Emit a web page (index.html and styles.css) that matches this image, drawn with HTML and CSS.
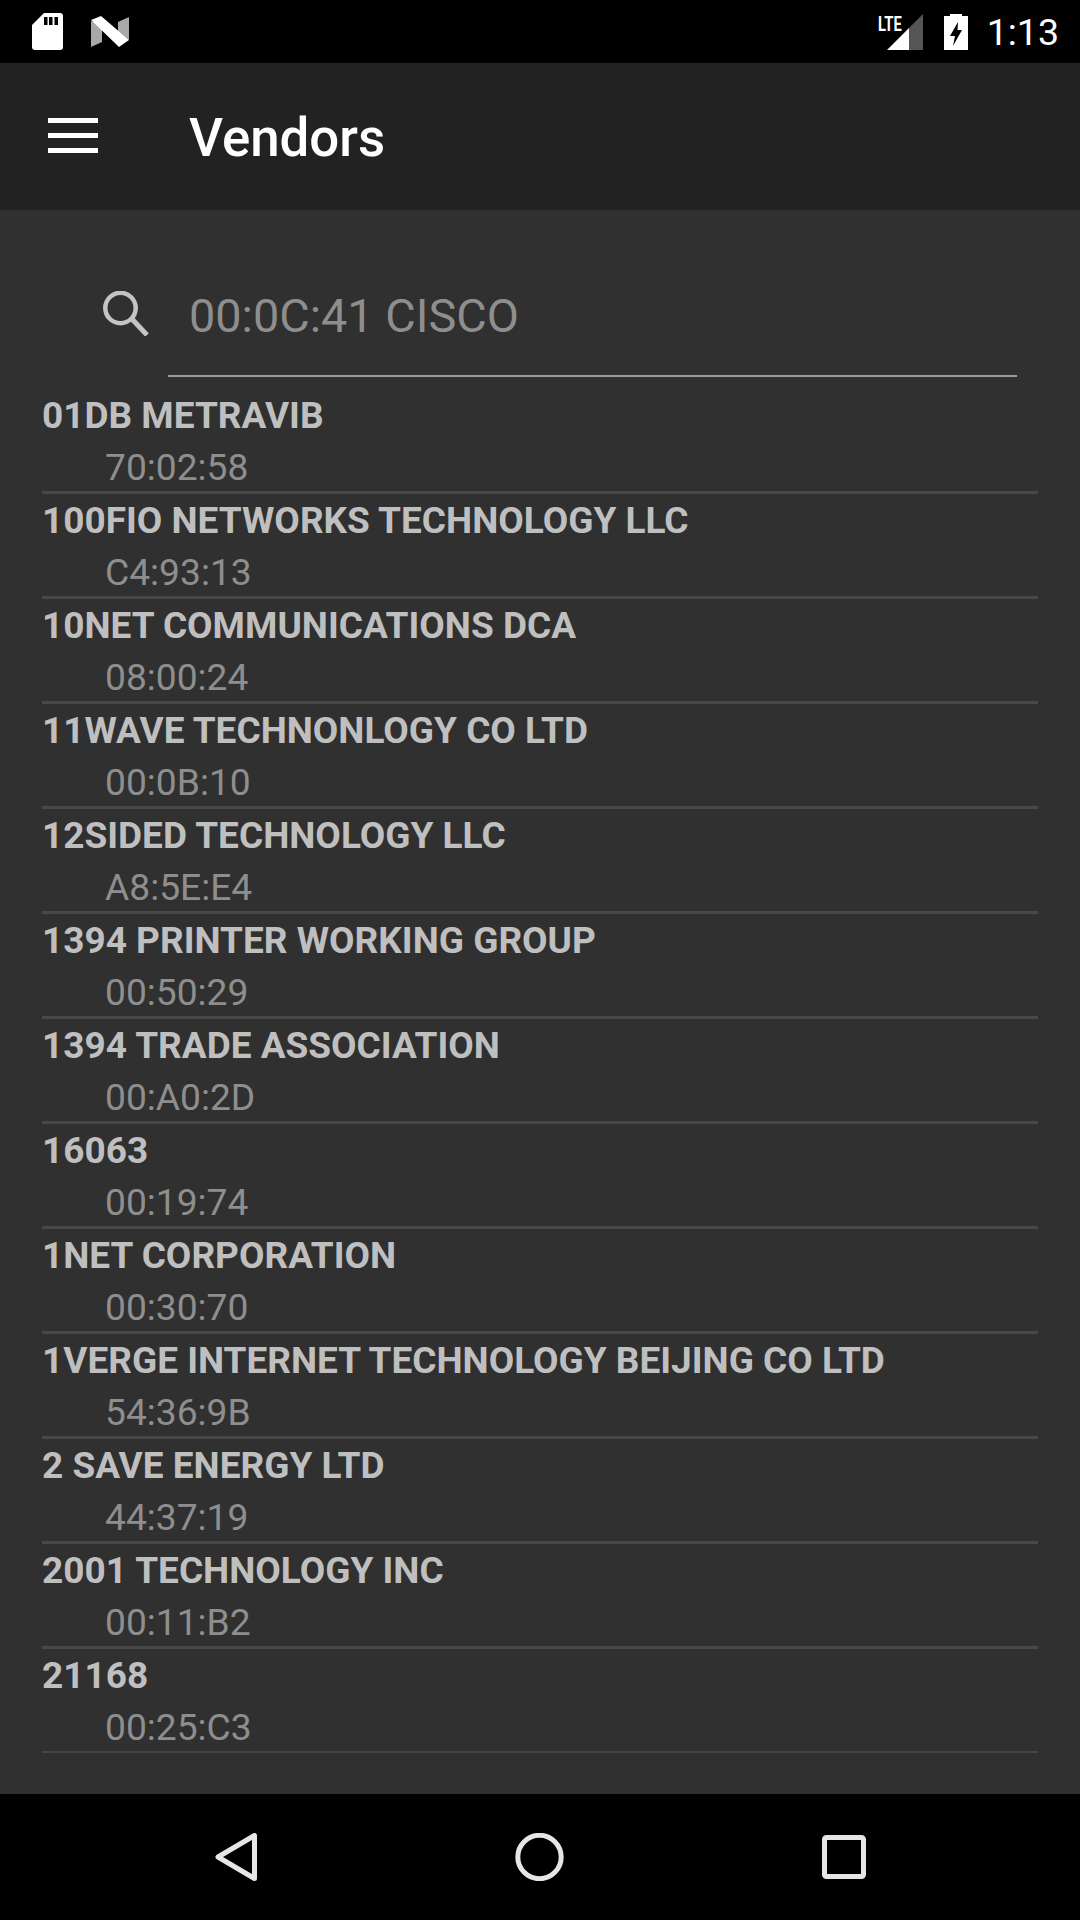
FILE: index.html
```html
<!DOCTYPE html>
<html lang="en">
<head>
<meta charset="utf-8">
<title>Vendors</title>
<link rel="stylesheet" href="styles.css">
</head>
<body>
<div class="screen">
  <header class="status">
    <div class="status-left">
      <svg class="ic-sd" viewBox="0 0 31 37"><path d="M12 0H28a3 3 0 0 1 3 3V34a3 3 0 0 1-3 3H3a3 3 0 0 1-3-3V12Z" fill="#fff"/><path d="M12 4h3.5v8H12zM17 4h3.5v8H17zM22.5 4H26v8h-3.5z" fill="#000"/></svg>
      <svg class="ic-n" viewBox="0 0 39 31"><path d="M1 5 12 9V26L1 31Z" fill="#a8a8a8"/><path d="M28 6 39 1V24L28 15Z" fill="#a8a8a8"/><path d="M1 4 11 0 39 24 29 31Z" fill="#fff"/></svg>
    </div>
    <div class="status-right">
      <div class="signal">
        <svg class="ic-signal" viewBox="0 0 36 36"><path d="M0 36 22 14V36Z" fill="#fff"/><path d="M22 14 36 0V36H22Z" fill="#555"/></svg>
        <span class="lte">LTE</span>
      </div>
      <svg class="ic-bat" viewBox="0 0 24 36"><path d="M6 0H18V2H24V36H0V2H6Z" fill="#fff"/><path d="M14 8 6 22H11L9 32 18 16H13.5Z" fill="#000"/></svg>
      <span class="clock">1:13</span>
    </div>
  </header>
  <div class="toolbar">
    <svg class="ic-menu" viewBox="0 0 50 35"><path d="M0 0H50V5H0ZM0 15H50V20H0ZM0 30H50V35H0Z" fill="#fff"/></svg>
    <h1 class="title">Vendors</h1>
  </div>
  <main class="content">
    <div class="search">
      <svg class="ic-search" viewBox="0 0 46 45"><circle cx="17.5" cy="17" r="15.2" fill="none" stroke="#c4c4c4" stroke-width="4.5"/><path d="M28 27 44 44" stroke="#c4c4c4" stroke-width="5" fill="none"/></svg>
      <div class="search-field">00:0C:41 CISCO</div>
    </div>
    <ul class="list">
      <li class="row"><div class="name">01DB METRAVIB</div><div class="mac">70:02:58</div></li>
      <li class="row"><div class="name">100FIO NETWORKS TECHNOLOGY LLC</div><div class="mac">C4:93:13</div></li>
      <li class="row"><div class="name">10NET COMMUNICATIONS DCA</div><div class="mac">08:00:24</div></li>
      <li class="row"><div class="name">11WAVE TECHNONLOGY CO LTD</div><div class="mac">00:0B:10</div></li>
      <li class="row"><div class="name">12SIDED TECHNOLOGY LLC</div><div class="mac">A8:5E:E4</div></li>
      <li class="row"><div class="name">1394 PRINTER WORKING GROUP</div><div class="mac">00:50:29</div></li>
      <li class="row"><div class="name">1394 TRADE ASSOCIATION</div><div class="mac">00:A0:2D</div></li>
      <li class="row"><div class="name">16063</div><div class="mac">00:19:74</div></li>
      <li class="row"><div class="name">1NET CORPORATION</div><div class="mac">00:30:70</div></li>
      <li class="row"><div class="name">1VERGE INTERNET TECHNOLOGY BEIJING CO LTD</div><div class="mac">54:36:9B</div></li>
      <li class="row"><div class="name">2 SAVE ENERGY LTD</div><div class="mac">44:37:19</div></li>
      <li class="row"><div class="name">2001 TECHNOLOGY INC</div><div class="mac">00:11:B2</div></li>
      <li class="row last"><div class="name">21168</div><div class="mac">00:25:C3</div></li>
    </ul>
  </main>
  <nav class="navbar">
    <svg class="ic-back" viewBox="0 0 42 48"><path d="M39.5 2.5V45.5L3 24Z" fill="none" stroke="#e6e6e6" stroke-width="5" stroke-linejoin="round"/></svg>
    <svg class="ic-home" viewBox="0 0 49 48"><circle cx="24.5" cy="24" r="21.7" fill="none" stroke="#e6e6e6" stroke-width="5"/></svg>
    <svg class="ic-recent" viewBox="0 0 44 44"><rect x="2.5" y="2.5" width="39" height="39" rx="2" fill="none" stroke="#e6e6e6" stroke-width="5"/></svg>
  </nav>
</div>
</body>
</html>
```
FILE: styles.css
```css
* { box-sizing: border-box; margin: 0; padding: 0; }
html, body { width: 1080px; height: 1920px; background: #000; overflow: hidden; }
body { font-family: Roboto, "Liberation Sans", sans-serif; }
.screen { width: 1080px; height: 1920px; display: flex; flex-direction: column; }
.status { height: 63px; background: #000; display: flex; justify-content: space-between; align-items: center; padding: 0 21px 0 32px; }
.status-left { display: flex; align-items: center; gap: 27px; }
.ic-sd { width: 31px; height: 37px; }
.ic-n { width: 39px; height: 31px; }
.status-right { display: flex; align-items: center; }
.signal { position: relative; width: 36px; height: 36px; margin-right: 21px; }
.ic-signal { display: block; width: 36px; height: 36px; }
.lte { position: absolute; left: -9px; top: -2px; font-size: 21px; font-weight: 700; line-height: 24px; color: #fff; transform: scaleX(.7); transform-origin: left center; }
.ic-bat { width: 24px; height: 36px; margin-right: 19px; }
.clock { color: #fff; font-size: 37.5px; line-height: 42px; }
.toolbar { height: 147px; background: #222; display: flex; align-items: center; padding-left: 48px; }
.ic-menu { width: 50px; height: 35px; margin-top: -2px; }
.title { margin-left: 91px; margin-top: 3px; font-size: 52.8px; font-weight: 500; color: #fff; line-height: 60px; }
.content { flex: 1; background: #303030; padding: 0 42px; }
.search { display: flex; align-items: flex-start; padding: 81px 21px 0 61px; height: 167px; margin-bottom: 12px; }
.ic-search { width: 46px; height: 45px; flex: none; margin-right: 19px; }
.search-field { flex: 1; padding-left: 21px; height: 86px; border-bottom: 2px solid #9a9a9a; color: #8e8e8e; font-size: 46.8px; line-height: 50px; }
.list { list-style: none; }
.row { height: 105px; border-bottom: 3px solid #484848; display: flex; flex-direction: column; }
.row.last { height: 104px; border-bottom: 2px solid #444; }
.name { color: #bfbfbf; font-size: 37px; font-weight: 700; line-height: 42px; margin-top: 6px; white-space: nowrap; }
.mac { color: #8e8e8e; font-size: 37.2px; line-height: 42px; margin-top: 9px; padding-left: 63px; }
.navbar { height: 126px; background: #000; display: flex; align-items: center; gap: 258px; padding-left: 215px; }
.ic-back { width: 42px; height: 48px; }
.ic-home { width: 49px; height: 48px; }
.ic-recent { width: 44px; height: 44px; }
```
